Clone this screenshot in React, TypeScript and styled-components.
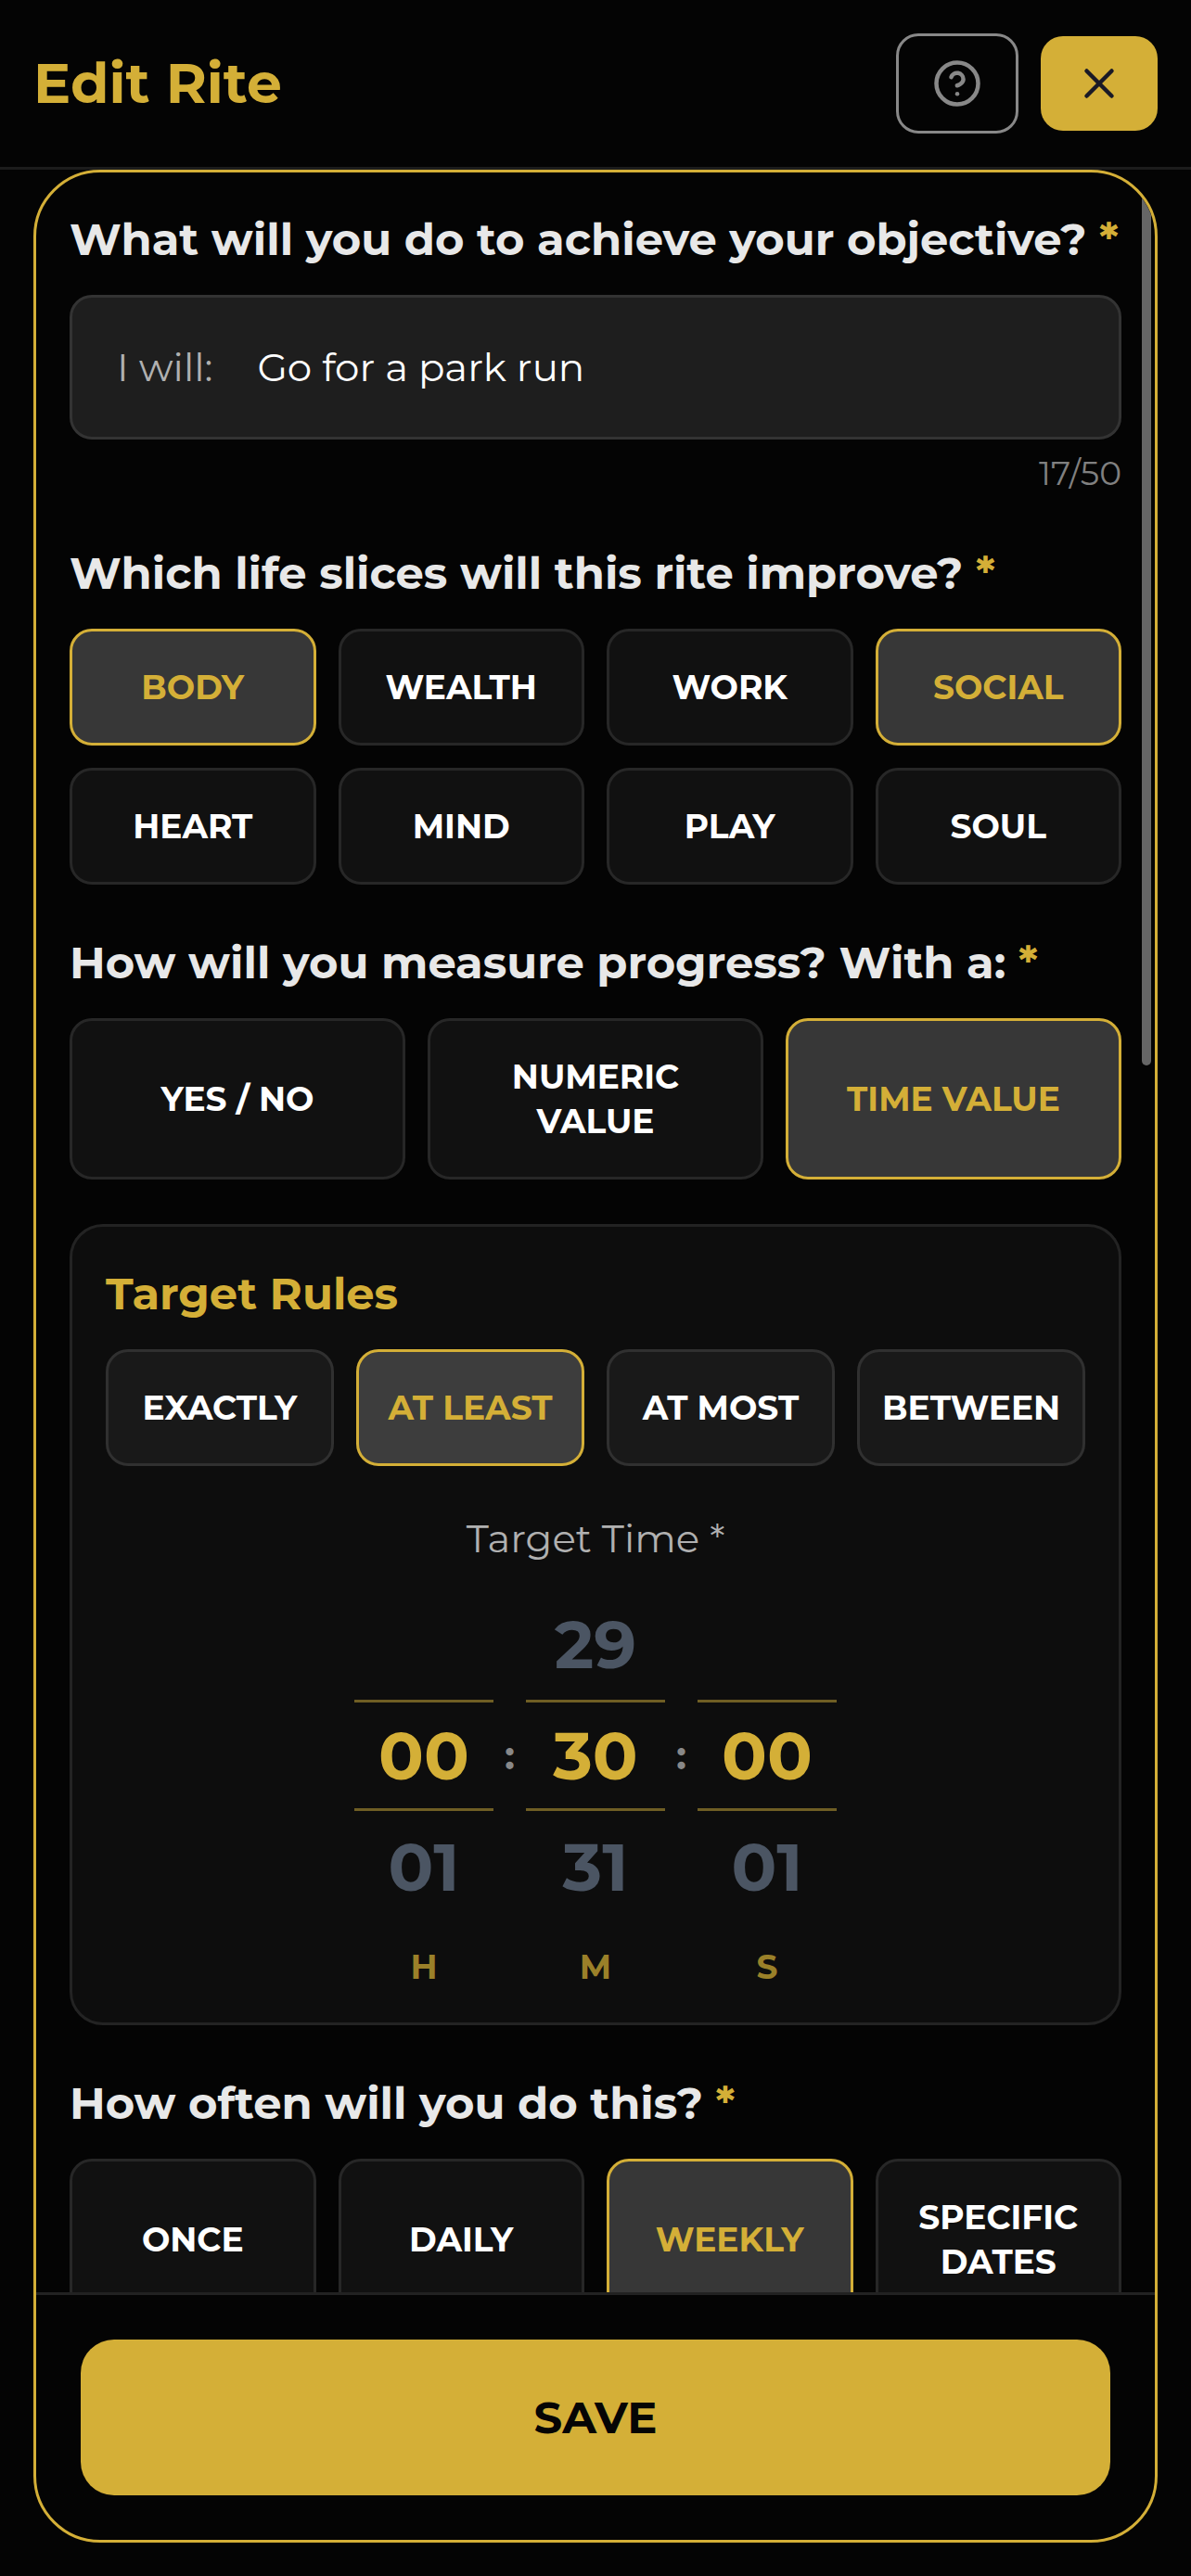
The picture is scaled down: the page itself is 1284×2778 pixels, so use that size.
import { useState } from 'react';
import styled, { createGlobalStyle, css } from 'styled-components';
import { CircleHelp, X } from 'lucide-react';

const gold = '#d4af37';
const ink = '#040404';

const GlobalStyle = createGlobalStyle`
  *, *::before, *::after { box-sizing: border-box; }
  body {
    margin: 0;
    background: ${ink};
    color: #ffffff;
    font-family: Montserrat, Inter, sans-serif;
  }
  button, input { font-family: inherit; margin: 0; }
  button { cursor: pointer; }
`;

const Screen = styled.div`
  display: flex;
  flex-direction: column;
  height: 100vh;
  padding-bottom: 36px;
`;

const Header = styled.header`
  display: flex;
  align-items: center;
  justify-content: space-between;
  padding: 36px;
  border-bottom: 3px solid #1c1c1c;
`;

const Title = styled.h1`
  margin: 0;
  color: ${gold};
  font-size: 60px;
  font-weight: 700;
  line-height: 72px;
`;

const HeaderActions = styled.div`
  display: flex;
  align-items: center;
  gap: 24px;
`;

const IconButton = styled.button<{ $filled?: boolean }>`
  display: flex;
  align-items: center;
  justify-content: center;
  padding: 24px 36px;
  border: 3px solid #888888;
  border-radius: 24px;
  background: transparent;
  color: #888888;
  ${({ $filled }) =>
    $filled &&
    css`
      border: 0;
      background: ${gold};
      color: #1a1a26;
    `}
`;

const Panel = styled.form`
  position: relative;
  display: flex;
  flex: 1;
  flex-direction: column;
  min-height: 0;
  margin: 0 36px;
  overflow: hidden;
  border: 3px solid ${gold};
  border-radius: 72px;
`;

const ScrollArea = styled.div`
  display: flex;
  flex: 1;
  flex-direction: column;
  gap: 48px;
  min-height: 0;
  padding: 36px;
  overflow-y: auto;
  scrollbar-width: none;
`;

const ScrollThumb = styled.div`
  position: absolute;
  top: 6px;
  right: 4px;
  width: 10px;
  height: 957px;
  border-radius: 5px;
  background: #666666;
`;

const Section = styled.section`
  display: flex;
  flex: none;
  flex-direction: column;
`;

const Heading = styled.h2<{ $accent?: boolean }>`
  margin: 0 0 24px;
  color: ${({ $accent }) => ($accent ? gold : '#e8e8e8')};
  font-size: 48px;
  font-weight: 700;
  line-height: 72px;
`;

const Required = styled.span`
  color: ${gold};
`;

const Field = styled.label`
  display: flex;
  align-items: center;
  gap: 48px;
  height: 156px;
  padding: 0 48px;
  border: 3px solid #333333;
  border-radius: 24px;
  background: #1e1e1e;
  font-size: 42px;
`;

const Prefix = styled.span`
  color: #b0b0b0;
  white-space: nowrap;
`;

const TextInput = styled.input`
  flex: 1;
  min-width: 0;
  padding: 0;
  border: 0;
  outline: 0;
  background: transparent;
  color: #ffffff;
  font-size: inherit;
`;

const Counter = styled.div`
  margin-top: 12px;
  color: #808080;
  font-size: 36px;
  line-height: 48px;
  text-align: right;
`;

const Options = styled.div<{ $columns: number }>`
  display: grid;
  grid-template-columns: repeat(${({ $columns }) => $columns}, minmax(0, 1fr));
  gap: 24px;
`;

const Option = styled.button<{ $raised?: boolean }>`
  padding: 36px 24px;
  border: 3px solid ${({ $raised }) => ($raised ? '#303030' : '#272727')};
  border-radius: 24px;
  background: ${({ $raised }) => ($raised ? '#191919' : '#111111')};
  color: #ffffff;
  font-size: 36px;
  font-weight: 700;
  line-height: 48px;
  text-transform: uppercase;

  &[aria-pressed='true'] {
    border-color: ${gold};
    background: ${({ $raised }) => ($raised ? '#3d3d3d' : '#373737')};
    color: ${gold};
  }
`;

const Card = styled.section`
  display: flex;
  flex: none;
  flex-direction: column;
  padding: 36px;
  border: 3px solid #232323;
  border-radius: 36px;
  background: #0d0d0d;
`;

const TimeLabel = styled.h3`
  margin: 48px 0 24px;
  color: #b0b0b0;
  font-size: 42px;
  font-weight: 400;
  line-height: 60px;
  text-align: center;
`;

const Picker = styled.div`
  display: grid;
  grid-template-columns: 150px 35px 150px 35px 150px;
  justify-content: center;
`;

const Wheel = styled.div`
  display: grid;
  grid-template-rows: repeat(3, 120px) auto;
`;

const WheelValue = styled.button<{ $current?: boolean }>`
  padding: 0;
  border: 0;
  border-block: 3px solid ${({ $current }) => ($current ? '#6f5e24' : 'transparent')};
  background: transparent;
  color: ${({ $current }) => ($current ? gold : '#4b5563')};
  font-size: 72px;
  font-weight: 700;
  line-height: 1;
`;

const Unit = styled.div`
  margin-top: 24px;
  color: #9a8029;
  font-size: 36px;
  font-weight: 700;
  line-height: 48px;
  text-align: center;
`;

const Colon = styled.div`
  height: 360px;
  color: #888888;
  font-size: 42px;
  font-weight: 700;
  line-height: 360px;
  text-align: center;
`;

const Footer = styled.footer`
  flex: none;
  padding: 48px;
  border-top: 3px solid #222222;
`;

const SaveButton = styled.button`
  width: 100%;
  padding: 48px;
  border: 0;
  border-radius: 36px;
  background: ${gold};
  color: #050505;
  font-size: 48px;
  font-weight: 700;
  line-height: 72px;
`;

const SLICES = ['Body', 'Wealth', 'Work', 'Social', 'Heart', 'Mind', 'Play', 'Soul'];
const MEASURES = ['Yes / No', 'Numeric Value', 'Time Value'];
const RULES = ['Exactly', 'At least', 'At most', 'Between'];
const FREQUENCIES = ['Once', 'Daily', 'Weekly', 'Specific Dates'];
const MAX_LENGTH = 50;

type OptionGroupProps = {
  label: string;
  items: string[];
  selected: string[];
  columns: number;
  raised?: boolean;
  onPick: (item: string) => void;
};

function OptionGroup({ label, items, selected, columns, raised, onPick }: OptionGroupProps) {
  return (
    <Options $columns={columns} role="group" aria-label={label}>
      {items.map((item) => (
        <Option
          key={item}
          type="button"
          $raised={raised}
          aria-pressed={selected.includes(item)}
          onClick={() => onPick(item)}
        >
          {item}
        </Option>
      ))}
    </Options>
  );
}

type TimeWheelProps = {
  unit: string;
  value: number;
  max: number;
  onChange: (value: number) => void;
};

function TimeWheel({ unit, value, max, onChange }: TimeWheelProps) {
  return (
    <Wheel>
      {[value - 1, value, value + 1].map((n, i) =>
        n < 0 || n > max ? (
          <span key={i} />
        ) : (
          <WheelValue key={i} type="button" $current={n === value} onClick={() => onChange(n)}>
            {String(n).padStart(2, '0')}
          </WheelValue>
        ),
      )}
      <Unit>{unit}</Unit>
    </Wheel>
  );
}

function Question({ text }: { text: string }) {
  return (
    <Heading>
      {text} <Required>*</Required>
    </Heading>
  );
}

export default function App() {
  const [action, setAction] = useState('Go for a park run');
  const [slices, setSlices] = useState(['Body', 'Social']);
  const [measure, setMeasure] = useState('Time Value');
  const [rule, setRule] = useState('At least');
  const [frequency, setFrequency] = useState('Weekly');
  const [hours, setHours] = useState(0);
  const [minutes, setMinutes] = useState(30);
  const [seconds, setSeconds] = useState(0);

  const toggleSlice = (item: string) =>
    setSlices((prev) => (prev.includes(item) ? prev.filter((s) => s !== item) : [...prev, item]));

  return (
    <>
      <GlobalStyle />
      <Screen>
        <Header>
          <Title>Edit Rite</Title>
          <HeaderActions>
            <IconButton type="button" aria-label="Help">
              <CircleHelp size={54} />
            </IconButton>
            <IconButton type="button" aria-label="Close" $filled>
              <X size={54} />
            </IconButton>
          </HeaderActions>
        </Header>
        <Panel onSubmit={(e) => e.preventDefault()}>
          <ScrollArea>
            <Section>
              <Question text="What will you do to achieve your objective?" />
              <Field>
                <Prefix>I will:</Prefix>
                <TextInput
                  type="text"
                  value={action}
                  maxLength={MAX_LENGTH}
                  onChange={(e) => setAction(e.target.value)}
                />
              </Field>
              <Counter>
                {action.length}/{MAX_LENGTH}
              </Counter>
            </Section>
            <Section>
              <Question text="Which life slices will this rite improve?" />
              <OptionGroup label="Life slices" items={SLICES} selected={slices} columns={4} onPick={toggleSlice} />
            </Section>
            <Section>
              <Question text="How will you measure progress? With a:" />
              <OptionGroup label="Measure" items={MEASURES} selected={[measure]} columns={3} onPick={setMeasure} />
            </Section>
            <Card>
              <Heading $accent>Target Rules</Heading>
              <OptionGroup label="Target rule" items={RULES} selected={[rule]} columns={4} raised onPick={setRule} />
              <TimeLabel>Target Time *</TimeLabel>
              <Picker>
                <TimeWheel unit="H" value={hours} max={23} onChange={setHours} />
                <Colon>:</Colon>
                <TimeWheel unit="M" value={minutes} max={59} onChange={setMinutes} />
                <Colon>:</Colon>
                <TimeWheel unit="S" value={seconds} max={59} onChange={setSeconds} />
              </Picker>
            </Card>
            <Section>
              <Question text="How often will you do this?" />
              <OptionGroup
                label="Frequency"
                items={FREQUENCIES}
                selected={[frequency]}
                columns={4}
                onPick={setFrequency}
              />
            </Section>
          </ScrollArea>
          <ScrollThumb />
          <Footer>
            <SaveButton type="submit">SAVE</SaveButton>
          </Footer>
        </Panel>
      </Screen>
    </>
  );
}
